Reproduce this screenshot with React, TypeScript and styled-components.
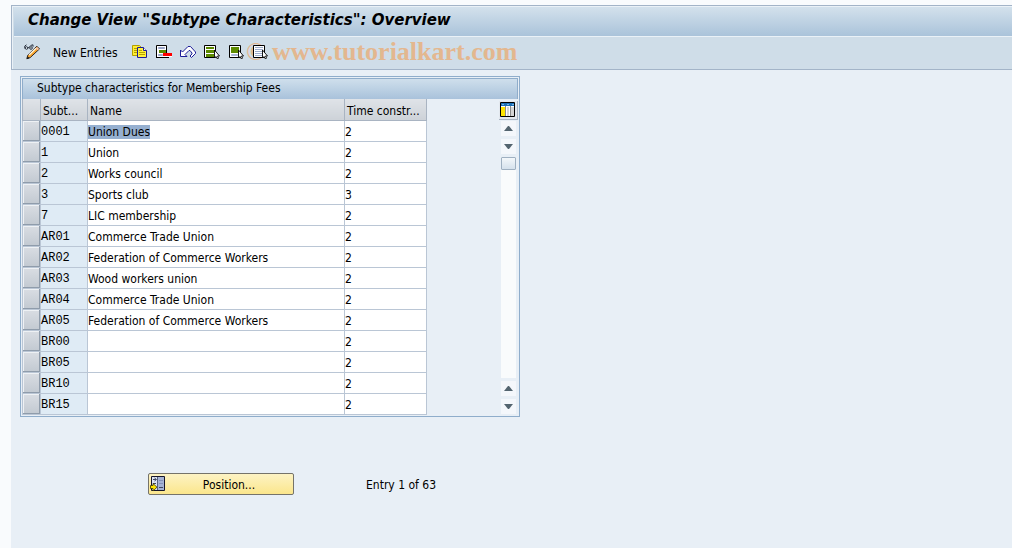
import React from "react";
import styled, { createGlobalStyle } from "styled-components";

const GlobalStyle = createGlobalStyle`
  * { box-sizing: border-box; }
  body {
    margin: 0;
    background: #f9fbfd;
    color: #000;
    font-family: "DejaVu Sans Condensed", "DejaVu Sans", Tahoma, sans-serif;
    font-stretch: condensed;
    font-size: 12px;
    line-height: 16px;
  }
  button, input { font: inherit; color: inherit; margin: 0; }
`;

const Page = styled.div`
  display: flex;
  flex-direction: column;
  min-height: 100vh;
  padding: 5px 0 0 11px;
`;

const Header = styled.header`
  background: #cfdde8;
  border: solid #a3b4c8;
  border-width: 1px 0 1px 1px;
  box-shadow: inset 1px 1px 0 #eaf1f7;
  padding-left: 2px;
`;

const TitleBar = styled.div`
  height: 31px;
  padding: 3px 14px;
  background: linear-gradient(#d3e1ec, #aac3da);
  border-top: 1px solid #eaf1f7;
  border-bottom: 1px solid #eaf1f7;
`;

const Title = styled.h1`
  margin: 0;
  font-family: "DejaVu Sans", Verdana, sans-serif;
  font-stretch: normal;
  font-size: 15px;
  line-height: 20px;
  font-weight: bold;
  font-style: italic;
`;

const Toolbar = styled.div`
  position: relative;
  display: flex;
  align-items: center;
  gap: 8px;
  height: 32px;
  padding: 0 10px 2px;
`;

const ToolButton = styled.button`
  position: relative;
  z-index: 1;
  display: flex;
  height: 16px;
  padding: 0;
  border: 0;
  background: none;
  white-space: nowrap;
`;

const TextButton = styled(ToolButton)`
  height: 18px;
  padding-top: 2px;
  margin: 0 6px 0 5px;
`;

const Watermark = styled.span`
  position: absolute;
  left: 232px;
  top: 0;
  color: #e3b78f;
  font: bold 26px/30px "Liberation Serif", serif;
  white-space: nowrap;
`;

const Main = styled.main`
  flex: 1;
  padding: 6px 9px;
  background: #e8eff6;
`;

const Panel = styled.section`
  max-width: 500px;
  padding: 1px;
  border: 1px solid #8fadcb;
`;

const PanelTitle = styled.h2`
  margin: 0;
  padding: 0 14px 2px;
  height: 21px;
  border: 1px solid #8fadcb;
  border-bottom: 0;
  background: linear-gradient(#cfdfec, #a9c2db);
  font-size: 12px;
  line-height: 18px;
  font-weight: normal;
`;

const PanelBody = styled.div`
  display: flex;
  justify-content: space-between;
`;

const Table = styled.table`
  width: 405px;
  table-layout: fixed;
  border-collapse: collapse;
`;

const Col = styled.col<{ $width?: number }>`
  width: ${(p) => (p.$width ? `${p.$width}px` : "auto")};
`;

const HeadCell = styled.th`
  height: 21px;
  padding: 4px 0 0 2px;
  border: 1px solid #a9b4c2;
  border-top: 0;
  background: linear-gradient(#dfe3e8, #cdd2d8);
  text-align: left;
  font-weight: normal;
  overflow: hidden;
  white-space: nowrap;
`;

const Cell = styled.td<{ $key?: boolean }>`
  height: 21px;
  padding: 0;
  border: 1px solid #bac6d5;
  background: ${(p) => (p.$key ? "#dfebf5" : "#fff")};
  font-family: ${(p) => (p.$key ? '"Liberation Mono", monospace' : "inherit")};
  line-height: 20px;
`;

const KeyText = styled.span`
  display: block;
  height: 20px;
  line-height: 22px;
`;

const RowButton = styled.button`
  display: block;
  width: 100%;
  height: 20px;
  padding: 0;
  border: solid #8f9cab;
  border-width: 0 1px 1px 0;
  box-shadow: inset 1px 1px 0 #eef1f4;
  background: linear-gradient(#d9dde3, #c3cad2);
`;

const Field = styled.input<{ $selected?: boolean }>`
  display: block;
  width: ${(p) => (p.$selected ? "auto" : "100%")};
  field-sizing: ${(p) => (p.$selected ? "content" : "fixed")};
  height: 14px;
  margin-top: 2px;
  padding: 0;
  border: 0;
  outline: 0;
  line-height: 14px;
  background: ${(p) => (p.$selected ? "#96b0d0" : "transparent")};
`;

const Side = styled.div`
  display: flex;
  flex-direction: column;
  align-items: flex-end;
  width: 18px;
  padding-top: 2px;
`;

const ConfigButton = styled.button`
  display: flex;
  padding: 1px;
  border: solid #a9b4c2;
  border-width: 0 1px 1px 0;
  background: #e3e8ee;
`;

const Scrollbar = styled.div`
  display: flex;
  flex: 1;
  flex-direction: column;
  align-items: flex-start;
  gap: 3px;
  width: 17px;
  padding: 1px 0;
`;

const ScrollButton = styled.button`
  display: flex;
  align-items: center;
  justify-content: center;
  width: 15px;
  height: 15px;
  padding: 0;
  border: 0;
  background: #f4f7fb;
`;

const Track = styled.div`
  flex: 1;
  width: 15px;
  background: #f9fbfc;
`;

const Thumb = styled.div`
  width: 15px;
  height: 13px;
  border: 1px solid #9fb0c1;
  border-radius: 1px;
  background: linear-gradient(#f3f7fa, #d5e1ec);
`;

const Footer = styled.footer`
  display: flex;
  align-items: center;
  gap: 72px;
  padding: 56px 128px 0;
`;

const PositionButton = styled.button`
  display: flex;
  align-items: center;
  width: 146px;
  height: 22px;
  padding: 0 1px;
  border: 1px solid #75736a;
  border-radius: 2px;
  background: linear-gradient(#fdf3c4, #fbe68c);
`;

const ButtonLabel = styled.span`
  flex: 1;
  padding-top: 2px;
  text-align: center;
`;

const EntryCount = styled.span`
  padding-top: 2px;
`;

function Icon({ children, size = 16 }: { children: React.ReactNode; size?: number }) {
  return (
    <svg width={size} height={size} viewBox={`0 0 ${size} ${size}`} aria-hidden="true">
      {children}
    </svg>
  );
}

const Cursor = () => (
  <path d="M10.500 6v8l1.500-1.500 1.500 2.500 1-1-1-2h2z" fill="#fff" stroke="#000" strokeWidth=".9" />
);

const PencilIcon = () => (
  <Icon>
    <path d="M.8 4.500V2L2.500.8M4 4l2-1.500M6.500 1.500L9 .8v2" fill="none" stroke="#2b3340" />
    <circle cx="2.500" cy="4" r="1.300" fill="#e8f0f6" stroke="#2b3340" />
    <circle cx="7" cy="4" r="1.300" fill="#e8f0f6" stroke="#2b3340" />
    <path d="M12.800 2.200l2.700 2.700-9.300 8.700-3.400 1.200 1-3.600z" fill="#f8a42c" stroke="#2e2622" />
    <path d="M12 4.200l-7 6.800" stroke="#fff3d6" strokeWidth="1.500" />
    <path d="M13 3l2 2-1.300 1.300-2-2z" fill="#f6c3b0" />
    <path d="M3 15l.6-2.400L5.500 14z" fill="#111" />
  </Icon>
);

const CopyIcon = () => (
  <Icon>
    <path d="M.5 1.500h7l2 2v8h-9z" fill="#ffed32" stroke="#b39f00" />
    <path d="M2 4.500h3M2 6.500h3M2 8.500h3" stroke="#b39f00" />
    <path d="M5.500 3.500h6l3 3v7h-9z" fill="#fff13c" stroke="#1c1c98" />
    <path d="M11.500 3.500v3h3" fill="#fff" stroke="#1c1c98" />
    <path d="M7 6.500h3M7 8.500h6M7 10.500h6" stroke="#b5a400" />
  </Icon>
);

const DeleteIcon = () => (
  <Icon>
    <path d="M.5 1.500h10v12H.5z" fill="#fff" stroke="#000" />
    <path d="M2.500 3.500h6v1h-6zM2.500 10.500h4v1h-4z" fill="#dce3f3" stroke="#9aa5c8" />
    <path d="M3 6h7v3H3z" fill="#5c8a00" />
    <path d="M7 9h9v4H7z" fill="#fff" />
    <path d="M7 9h9v3H7z" fill="#f00" />
    <path d="M0 13.500h13" stroke="#000" />
  </Icon>
);

const UndoIcon = () => (
  <Icon>
    <path d="M.5 6v6.500H7l-2-2 4-4h1L12 9v1l-2 2 1.500 1.500 4-4V8l-5-5.500H8L2.500 8z" fill="#fff" stroke="#1c1c98" />
  </Icon>
);

const SelectAllIcon = () => (
  <Icon>
    <path d="M.5 1.500h11v12H.5z" fill="#fff" stroke="#000" />
    <path d="M2 3h8v2H2zM2 6h8v3H2zM2 10h8v3H2z" fill="#5c8a00" />
    <Cursor />
  </Icon>
);

const SelectBlockIcon = () => (
  <Icon>
    <path d="M1.500 1.500h11v12h-11z" fill="#fff" stroke="#000" />
    <path d="M3 3h8v6H3z" fill="#5c8a00" />
    <path d="M3.500 10.500h6v1h-6z" fill="#dce3f3" stroke="#a5b4d4" />
    <Cursor />
  </Icon>
);

const DeselectIcon = () => (
  <Icon>
    <path d="M1.500 1.500h11v12h-11z" fill="#fff" stroke="#000" />
    <path d="M3 3.500h8M3 5.500h8M3 7.500h8M3 9.500h8M3 11.500h7" stroke="#9daccb" />
    <Cursor />
  </Icon>
);

const ConfigIcon = () => (
  <Icon>
    <path d="M.5.5h14v14H.5z" fill="#fff" stroke="#000" />
    <path d="M1 1h13v3H1z" fill="#1b6eb5" />
    <path d="M1 5h4v9H1z" fill="#ffe500" />
    <path d="M7 5h2v9H7zM11 5h3v9h-3z" fill="#d5d5d5" />
    <path d="M5.500 4v10M10.500 4v10" stroke="#8a8a8a" />
    <path d="M2 2.500h2M7 2.500h2M12 2.500h2" stroke="#74b2e4" />
  </Icon>
);

const PositionIcon = () => (
  <Icon>
    <path d="M1.500.5h13v14h-13z" fill="#dce4f4" stroke="#15152a" />
    <path d="M8 1h6v13H8z" fill="#a5b2d4" />
    <path d="M7.500 1v13" stroke="#56617f" />
    <path d="M3 3.500h3M3 7.500h3M9 11.500h4" stroke="#404860" />
    <path d="M4.500 2L6.500 3.500l-2 1.500" stroke="#404860" fill="none" />
    <path d="M9 4.500h4M9 7.500h4" stroke="#8492b8" />
    <path d="M.5 9.500H3v-2l4 3.700-4 3.800v-2.500H.5z" fill="#ffe600" stroke="#3c3500" strokeWidth=".8" />
  </Icon>
);

const Arrow = ({ down }: { down?: boolean }) => (
  <svg width="9" height="5" viewBox="0 0 9 5" aria-hidden="true">
    <path d={down ? "M0 0h9L5 5H4z" : "M0 5h9L5 0H4z"} fill="#53646f" />
  </svg>
);

const tools = [
  { label: "Copy As", Glyph: CopyIcon },
  { label: "Delete", Glyph: DeleteIcon },
  { label: "Undo Change", Glyph: UndoIcon },
  { label: "Select All", Glyph: SelectAllIcon },
  { label: "Select Block", Glyph: SelectBlockIcon },
  { label: "Deselect All", Glyph: DeselectIcon },
];

const rows = [
  ["0001", "Union Dues", "2"],
  ["1", "Union", "2"],
  ["2", "Works council", "2"],
  ["3", "Sports club", "3"],
  ["7", "LIC membership", "2"],
  ["AR01", "Commerce Trade Union", "2"],
  ["AR02", "Federation of Commerce Workers", "2"],
  ["AR03", "Wood workers union", "2"],
  ["AR04", "Commerce Trade Union", "2"],
  ["AR05", "Federation of Commerce Workers", "2"],
  ["BR00", "", "2"],
  ["BR05", "", "2"],
  ["BR10", "", "2"],
  ["BR15", "", "2"],
];

export default function App() {
  return (
    <Page>
      <GlobalStyle />
      <Header>
        <TitleBar>
          <Title>Change View "Subtype Characteristics": Overview</Title>
        </TitleBar>
        <Toolbar>
          <Watermark>© www.tutorialkart.com</Watermark>
          <ToolButton aria-label="Display or Change"><PencilIcon /></ToolButton>
          <TextButton>New Entries</TextButton>
          {tools.map(({ label, Glyph }) => (
            <ToolButton key={label} aria-label={label}><Glyph /></ToolButton>
          ))}
        </Toolbar>
      </Header>
      <Main>
        <Panel>
          <PanelTitle>Subtype characteristics for Membership Fees</PanelTitle>
          <PanelBody>
            <Table>
              <colgroup>
                <Col $width={18} />
                <Col $width={47} />
                <Col />
                <Col $width={82} />
              </colgroup>
              <thead>
                <tr>
                  <HeadCell aria-label="Row selection" />
                  <HeadCell>Subt...</HeadCell>
                  <HeadCell>Name</HeadCell>
                  <HeadCell>Time constr...</HeadCell>
                </tr>
              </thead>
              <tbody>
                {rows.map(([key, name, constraint], i) => (
                  <tr key={key}>
                    <Cell><RowButton aria-label={`Select row ${key}`} /></Cell>
                    <Cell $key><KeyText>{key}</KeyText></Cell>
                    <Cell><Field $selected={i === 0} aria-label={`Name ${key}`} defaultValue={name} /></Cell>
                    <Cell><Field aria-label={`Time constraint ${key}`} defaultValue={constraint} /></Cell>
                  </tr>
                ))}
              </tbody>
            </Table>
            <Side>
              <ConfigButton aria-label="Table settings"><ConfigIcon /></ConfigButton>
              <Scrollbar>
                <ScrollButton aria-label="First row"><Arrow /></ScrollButton>
                <ScrollButton aria-label="Previous row"><Arrow down /></ScrollButton>
                <Track><Thumb /></Track>
                <ScrollButton aria-label="Next row"><Arrow /></ScrollButton>
                <ScrollButton aria-label="Last row"><Arrow down /></ScrollButton>
              </Scrollbar>
            </Side>
          </PanelBody>
        </Panel>
        <Footer>
          <PositionButton><PositionIcon /><ButtonLabel>Position...</ButtonLabel></PositionButton>
          <EntryCount>Entry 1 of 63</EntryCount>
        </Footer>
      </Main>
    </Page>
  );
}
